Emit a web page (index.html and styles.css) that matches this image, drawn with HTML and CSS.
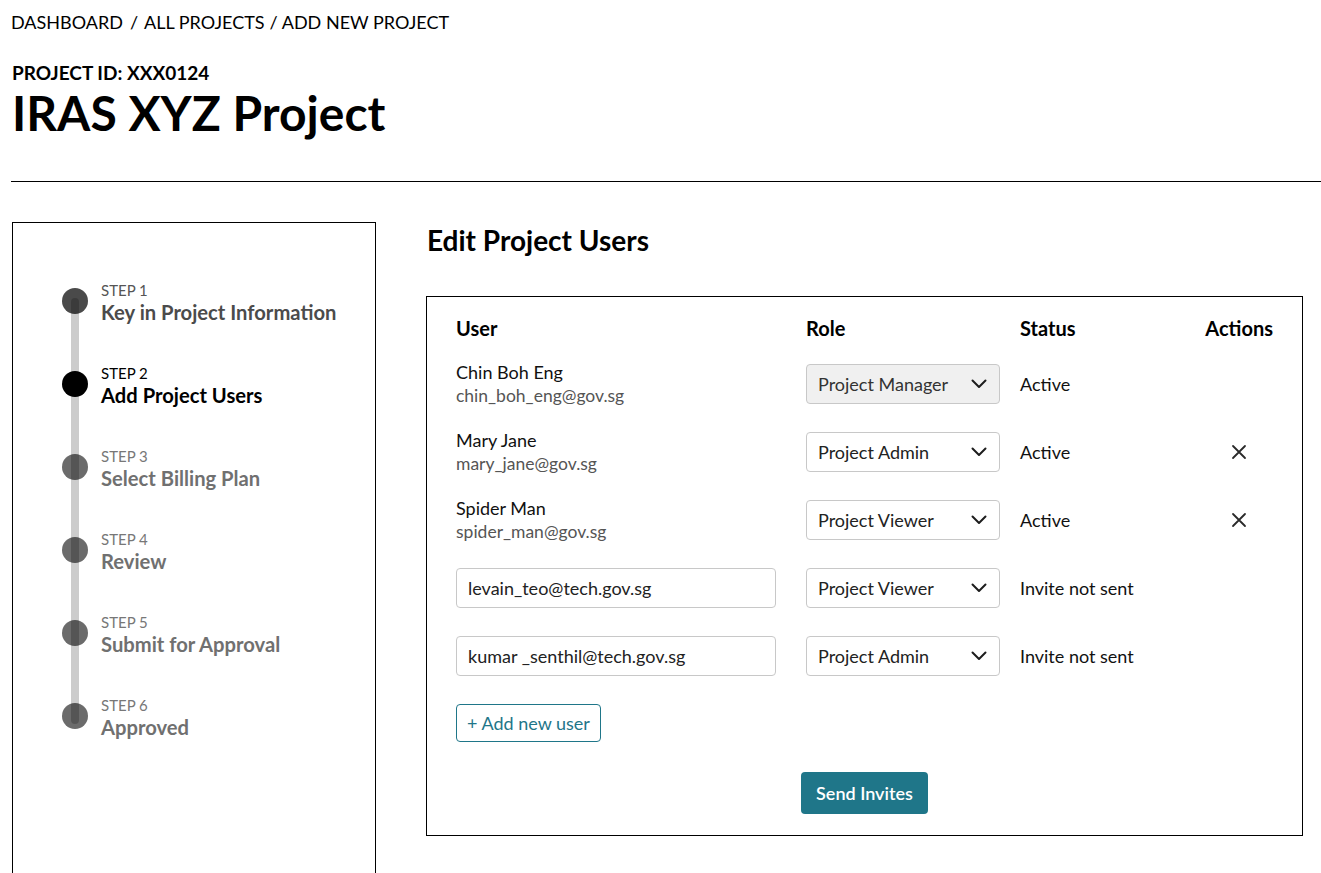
FILE: index.html
```html
<!DOCTYPE html>
<html lang="en">
<head>
<meta charset="utf-8">
<title>IRAS XYZ Project - Add Project Users</title>
<link rel="stylesheet" href="styles.css">
</head>
<body>
<header class="page-header">
  <nav class="breadcrumb">
    <span>DASHBOARD</span><span class="sep">/</span><span>ALL PROJECTS</span><span class="sep sep-tight">/</span><span>ADD NEW PROJECT</span>
  </nav>
  <div class="project-id">PROJECT ID: XXX0124</div>
  <h1 class="project-title">IRAS XYZ Project</h1>
</header>

<div class="layout">
  <aside class="sidebar">
    <ol class="steps">
      <li class="step step-done">
        <span class="dot"></span>
        <div class="step-text"><div class="step-num">STEP 1</div><div class="step-label">Key in Project Information</div></div>
      </li>
      <li class="step step-current">
        <span class="dot"></span>
        <div class="step-text"><div class="step-num">STEP 2</div><div class="step-label">Add Project Users</div></div>
      </li>
      <li class="step step-todo">
        <span class="dot"></span>
        <div class="step-text"><div class="step-num">STEP 3</div><div class="step-label">Select Billing Plan</div></div>
      </li>
      <li class="step step-todo">
        <span class="dot"></span>
        <div class="step-text"><div class="step-num">STEP 4</div><div class="step-label">Review</div></div>
      </li>
      <li class="step step-todo">
        <span class="dot"></span>
        <div class="step-text"><div class="step-num">STEP 5</div><div class="step-label">Submit for Approval</div></div>
      </li>
      <li class="step step-todo">
        <span class="dot"></span>
        <div class="step-text"><div class="step-num">STEP 6</div><div class="step-label">Approved</div></div>
      </li>
      <span class="track"></span>
    </ol>
  </aside>

  <main class="content">
    <h2 class="section-title">Edit Project Users</h2>
    <section class="card">
      <div class="users-grid">
        <div class="th">User</div>
        <div class="th">Role</div>
        <div class="th">Status</div>
        <div class="th th-actions">Actions</div>

        <div class="cell user"><div class="name">Chin Boh Eng</div><div class="email">chin_boh_eng@gov.sg</div></div>
        <div class="cell"><div class="select select-disabled"><span>Project Manager</span><svg class="chev" viewBox="0 0 16 10" width="16" height="10"><path d="M1.5 1.5 L8 8 L14.5 1.5" fill="none" stroke="#1d1d1d" stroke-width="2" stroke-linecap="round" stroke-linejoin="round"/></svg></div></div>
        <div class="cell status">Active</div>
        <div class="cell actions"></div>

        <div class="cell user"><div class="name">Mary Jane</div><div class="email">mary_jane@gov.sg</div></div>
        <div class="cell"><div class="select"><span>Project Admin</span><svg class="chev" viewBox="0 0 16 10" width="16" height="10"><path d="M1.5 1.5 L8 8 L14.5 1.5" fill="none" stroke="#1d1d1d" stroke-width="2" stroke-linecap="round" stroke-linejoin="round"/></svg></div></div>
        <div class="cell status">Active</div>
        <div class="cell actions"><svg class="x" viewBox="0 0 16 16" width="16" height="16"><path d="M2 2 L14 14 M14 2 L2 14" stroke="#2a2a2a" stroke-width="1.8" stroke-linecap="round"/></svg></div>

        <div class="cell user"><div class="name">Spider Man</div><div class="email">spider_man@gov.sg</div></div>
        <div class="cell"><div class="select"><span>Project Viewer</span><svg class="chev" viewBox="0 0 16 10" width="16" height="10"><path d="M1.5 1.5 L8 8 L14.5 1.5" fill="none" stroke="#1d1d1d" stroke-width="2" stroke-linecap="round" stroke-linejoin="round"/></svg></div></div>
        <div class="cell status">Active</div>
        <div class="cell actions"><svg class="x" viewBox="0 0 16 16" width="16" height="16"><path d="M2 2 L14 14 M14 2 L2 14" stroke="#2a2a2a" stroke-width="1.8" stroke-linecap="round"/></svg></div>

        <div class="cell"><div class="input">levain_teo@tech.gov.sg</div></div>
        <div class="cell"><div class="select"><span>Project Viewer</span><svg class="chev" viewBox="0 0 16 10" width="16" height="10"><path d="M1.5 1.5 L8 8 L14.5 1.5" fill="none" stroke="#1d1d1d" stroke-width="2" stroke-linecap="round" stroke-linejoin="round"/></svg></div></div>
        <div class="cell status">Invite not sent</div>
        <div class="cell actions"></div>

        <div class="cell"><div class="input">kumar _senthil@tech.gov.sg</div></div>
        <div class="cell"><div class="select"><span>Project Admin</span><svg class="chev" viewBox="0 0 16 10" width="16" height="10"><path d="M1.5 1.5 L8 8 L14.5 1.5" fill="none" stroke="#1d1d1d" stroke-width="2" stroke-linecap="round" stroke-linejoin="round"/></svg></div></div>
        <div class="cell status">Invite not sent</div>
        <div class="cell actions"></div>
      </div>

      <div class="add-row"><button class="btn-outline">+ Add new user</button></div>
      <div class="send-row"><button class="btn-primary">Send Invites</button></div>
    </section>
  </main>
</div>
</body>
</html>
```

FILE: styles.css
```css
* { box-sizing: border-box; }

html, body {
  margin: 0;
  padding: 0;
  background: #fff;
  color: #000;
  font-family: Lato, "Open Sans", "Liberation Sans", sans-serif;
}

body {
  padding-left: 11px;
}

.page-header {
  border-bottom: 1px solid #000;
  padding-top: 11px;
  padding-bottom: 40px;
}

.breadcrumb {
  font-size: 18px;
  line-height: 22px;
  color: #000;
  white-space: nowrap;
}

.breadcrumb .sep {
  margin: 0 6px 0 7px;
}

.breadcrumb .sep-tight {
  margin: 0 4px 0 5px;
}

.project-id {
  margin-top: 29px;
  margin-left: 1px;
  font-size: 19px;
  line-height: 22px;
  font-weight: 700;
}

.project-title {
  margin: 1px 0 0 1px;
  font-size: 48px;
  line-height: 56px;
  font-weight: 700;
}

.layout {
  display: flex;
  align-items: flex-start;
  margin-top: 40px;
}

.sidebar {
  flex: 0 0 364px;
  height: 700px;
  margin-left: 1px;
  border: 1px solid #000;
  border-bottom: none;
  padding: 58px 0 0 49px;
}

.steps {
  position: relative;
  list-style: none;
  margin: 0;
  padding: 0;
  display: flex;
  flex-direction: column;
  gap: 40px;
}

.step {
  display: flex;
  align-items: flex-start;
  gap: 13px;
}

.dot {
  flex: 0 0 26px;
  width: 26px;
  height: 26px;
  margin-top: 7px;
  border-radius: 50%;
  background: #6b6b6b;
}

.step-text {
  display: flex;
  flex-direction: column;
}

.step-num {
  font-size: 15px;
  line-height: 19px;
}

.step-label {
  font-size: 20.2px;
  line-height: 24px;
  font-weight: 700;
}

.step-done .dot { background: #4a4a4a; }
.step-done .step-num { color: #555; }
.step-done .step-label { color: #4b4b4b; }

.step-current .dot { background: #000; }
.step-current .step-num,
.step-current .step-label { color: #000; }

.step-todo .step-num { color: #777; }
.step-todo .step-label { color: #707070; }

.track {
  position: absolute;
  left: 9px;
  top: 17px;
  bottom: 15px;
  width: 8px;
  border-radius: 4px;
  background: rgba(0, 0, 0, 0.2);
}

.content {
  flex: 0 0 877px;
  margin-left: 50px;
}

.section-title {
  margin: 1px 0 0 1px;
  font-size: 28px;
  line-height: 34px;
  font-weight: 700;
}

.card {
  margin-top: 39px;
  border: 1px solid #000;
  padding: 19px 29px 21px 29px;
}

.users-grid {
  display: grid;
  grid-template-columns: 350px 214px 1fr auto;
  row-gap: 20px;
  align-items: center;
}

.th {
  font-size: 20px;
  line-height: 24px;
  font-weight: 700;
}

.th-actions {
  text-align: center;
}

.cell {
  min-height: 48px;
  display: flex;
  flex-direction: column;
  justify-content: center;
  font-size: 18px;
}

.user .name {
  font-size: 18px;
  line-height: 24px;
  color: #111;
}

.user .email {
  font-size: 17.5px;
  line-height: 24px;
  color: #555;
}

.select {
  width: 194px;
  height: 40px;
  border: 1px solid #c8c8c8;
  border-radius: 4px;
  background: #fff;
  display: flex;
  align-items: center;
  justify-content: space-between;
  padding: 0 12px 0 11px;
  font-size: 18px;
  color: #222;
}

.select-disabled {
  background: #f0f0f0;
  color: #333;
}

.chev {
  display: block;
}

.status {
  color: #111;
}

.actions {
  align-items: center;
}

.x {
  display: block;
}

.input {
  width: 320px;
  height: 40px;
  border: 1px solid #c8c8c8;
  border-radius: 4px;
  display: flex;
  align-items: center;
  padding: 0 11px;
  font-size: 18px;
  color: #222;
}

.add-row {
  margin-top: 24px;
}

.btn-outline {
  height: 38px;
  padding: 0 10px;
  border: 1px solid #1f7689;
  border-radius: 4px;
  background: #fff;
  color: #1f7689;
  font-family: inherit;
  font-size: 18px;
  cursor: pointer;
}

.send-row {
  margin-top: 30px;
  display: flex;
  justify-content: center;
}

.btn-primary {
  height: 42px;
  padding: 0 15px;
  border: none;
  border-radius: 4px;
  background: #1f7689;
  color: #fff;
  font-family: inherit;
  font-size: 18px;
  font-weight: 600;
  cursor: pointer;
}
```
